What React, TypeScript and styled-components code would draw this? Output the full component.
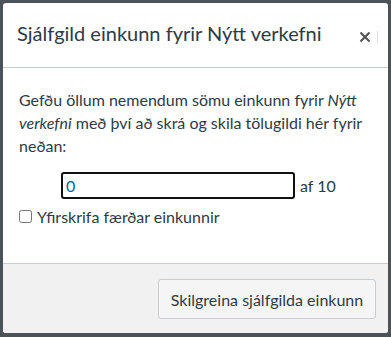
import styled, { createGlobalStyle } from "styled-components"

const GlobalStyle = createGlobalStyle`
  html, body {
    margin: 0;
    padding: 0;
    background: #4b5259;
  }
  body {
    font-family: Lato, "Liberation Sans", sans-serif;
    color: #2d3b45;
  }
`

const Dialog = styled.div`
  margin: 3px;
  width: 385px;
  height: 330px;
  background: #fff;
  border-radius: 3px;
  display: flex;
  flex-direction: column;
  overflow: hidden;
  box-sizing: border-box;
`

const Header = styled.div`
  height: 64px;
  flex: none;
  display: flex;
  align-items: center;
  justify-content: space-between;
  padding: 0 10px 0 14px;
  border-bottom: 1px solid #c7cdd1;
`

const Title = styled.h1`
  margin: 0;
  font-size: 20px;
  font-weight: 400;
  color: #2d3b45;
  padding-bottom: 4px;
`

const Close = styled.button`
  border: none;
  background: none;
  padding: 0 6px 0 8px;
  margin-top: 4px;
  border-right: 1px solid #d8dde2;
  display: flex;
  align-items: center;
  cursor: pointer;
`

const Body = styled.div`
  flex: 1;
  padding: 20px 16px 0 16px;
`

const Text = styled.p`
  margin: 0;
  font-size: 16px;
  line-height: 23px;
`

const InputRow = styled.div`
  display: flex;
  align-items: center;
  gap: 5px;
  margin: 15px 0 0 42px;
`

const GradeInput = styled.input`
  width: 234px;
  height: 27px;
  box-sizing: border-box;
  border: 2px solid #111;
  border-radius: 3px;
  padding: 0 3px;
  font-family: inherit;
  font-size: 16px;
  color: #0a5bbd;
  outline: none;
`

const OutOf = styled.span`
  font-size: 16px;
`

const CheckRow = styled.label`
  display: flex;
  align-items: center;
  gap: 5px;
  margin-top: 8px;
  font-size: 16px;

  input {
    margin: 0;
    width: 13px;
    height: 13px;
  }
`

const Footer = styled.div`
  height: 70px;
  flex: none;
  background: #f1f1f1;
  border-top: 1px solid #c7cdd1;
  display: flex;
  justify-content: flex-end;
  align-items: flex-start;
  padding: 15px 12px 0 0;
  box-sizing: border-box;
`

const Button = styled.button`
  height: 40px;
  width: 218px;
  background: #f5f5f5;
  border: 1px solid #c7cdd1;
  border-radius: 3px;
  font-family: inherit;
  font-size: 16px;
  color: #2d3b45;
  cursor: pointer;
`

export default function App() {
  return (
    <>
      <GlobalStyle />
      <Dialog>
        <Header>
          <Title>Sjálfgild einkunn fyrir Nýtt verkefni</Title>
          <Close aria-label="Loka">
            <svg width="12" height="12" viewBox="0 0 12 12">
              <path d="M1.5 1.5 L10.5 10.5 M10.5 1.5 L1.5 10.5" stroke="#555" strokeWidth="2.2" />
            </svg>
          </Close>
        </Header>
        <Body>
          <Text>
            Gefðu öllum nemendum sömu einkunn fyrir <em>Nýtt verkefni</em> með því að skrá og skila
            tölugildi hér fyrir neðan:
          </Text>
          <InputRow>
            <GradeInput defaultValue="0" />
            <OutOf>af 10</OutOf>
          </InputRow>
          <CheckRow>
            <input type="checkbox" />
            Yfirskrifa færðar einkunnir
          </CheckRow>
        </Body>
        <Footer>
          <Button>Skilgreina sjálfgilda einkunn</Button>
        </Footer>
      </Dialog>
    </>
  )
}
